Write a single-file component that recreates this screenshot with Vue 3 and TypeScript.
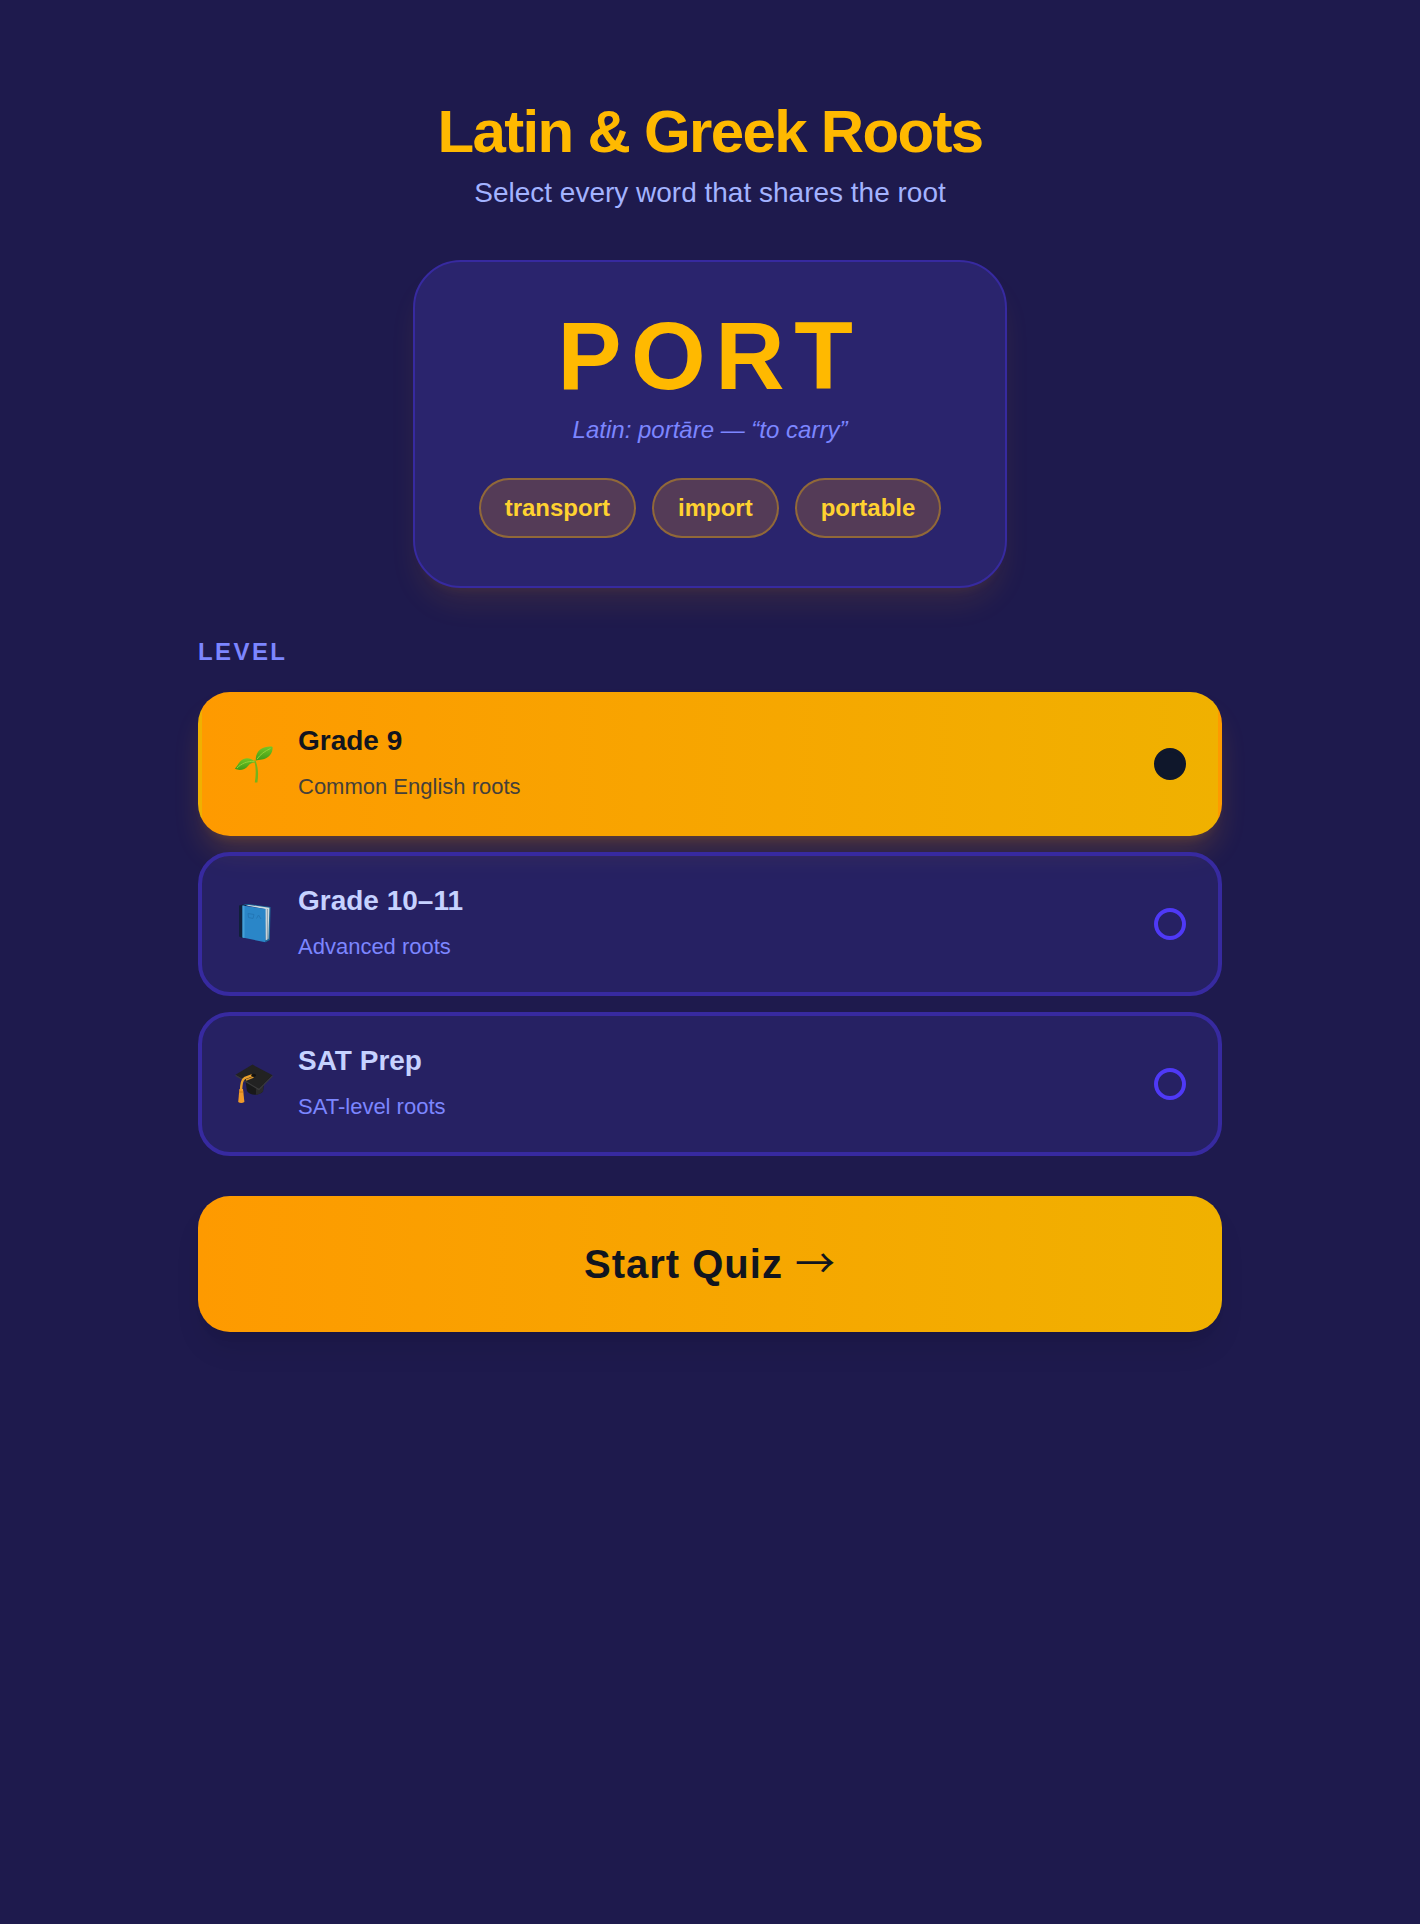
<script setup lang="ts">
import { ref } from 'vue'

interface Level {
  id: string
  icon: 'sprout' | 'book' | 'cap'
  name: string
  note: string
}

const examples: string[] = ['transport', 'import', 'portable']

const levels: Level[] = [
  { id: 'grade-9', icon: 'sprout', name: 'Grade 9', note: 'Common English roots' },
  { id: 'grade-10-11', icon: 'book', name: 'Grade 10–11', note: 'Advanced roots' },
  { id: 'sat', icon: 'cap', name: 'SAT Prep', note: 'SAT-level roots' },
]

const selected = ref<string>('grade-9')
</script>

<template>
  <main class="page">
    <header class="intro">
      <h1 class="title">Latin &amp; Greek Roots</h1>
      <p class="subtitle">Select every word that shares the root</p>
    </header>

    <section class="root-card">
      <h2 class="root">PORT</h2>
      <p class="origin">Latin: portāre — “to carry”</p>
      <ul class="chips">
        <li v-for="word in examples" :key="word" class="chip">{{ word }}</li>
      </ul>
    </section>

    <form class="form" @submit.prevent>
      <fieldset class="levels">
        <legend class="legend">LEVEL</legend>
        <div class="options">
          <label
            v-for="level in levels"
            :key="level.id"
            class="option"
            :class="{ active: selected === level.id }"
          >
            <svg v-if="level.icon === 'sprout'" class="icon" viewBox="0 0 40 40" aria-hidden="true">
              <defs>
                <linearGradient id="leaf" x1="0" y1="0" x2="0" y2="1">
                  <stop offset="0" stop-color="#74c626" />
                  <stop offset="1" stop-color="#3f9a17" />
                </linearGradient>
              </defs>
              <path d="M21 15.5C24 22 24.800 29 23.400 38.500L20.800 38.500C22.200 30 22 23 20.300 17Z" fill="#74b41c" />
              <path d="M21.800 16.600C21.500 9.500 25 4.500 31 3.200C34 2.500 37.500 2.400 38.600 3C39 9 34.500 14.800 28 15.400C25.500 15.600 23.200 15.900 21.800 16.600Z" fill="url(#leaf)" />
              <path d="M21.800 18.200C16.500 13.200 10.500 13.300 6.800 16.800C4.200 19.300 2.800 22.800 0.800 24.800C5 27 11 26 14 22C16 19.300 18.500 18.300 21.800 18.200Z" fill="url(#leaf)" />
              <path d="M23 15.200C26 10.500 31 7 36.500 4.500M3 24C7.500 19.500 13 17 20.500 17.400" fill="none" stroke="#93d238" stroke-width="1" />
            </svg>
            <svg v-else-if="level.icon === 'book'" class="icon" viewBox="0 0 40 40" aria-hidden="true">
              <path d="M5 1.600L9 0.400L12 1V33L8.500 34L5 32.500Z" fill="#10203a" />
              <path d="M9 0.600L14 0L36.600 3L35.800 36L31.500 38.200L31 5Z" fill="#1d6697" />
              <path d="M12 1.400L15 0.900L35.400 3.800L34.400 34.800L31.500 36.500L31 5Z" fill="#cfdadf" />
              <path d="M33.400 5V35" stroke="#8fa3ad" stroke-width="1" />
              <path d="M8.500 1.400L31.600 5L31.400 38.200L8.500 33.600Z" fill="#2a86c8" />
              <path d="M8.500 1.400L10.500 1.700V34L8.500 33.600Z" fill="#45a0d8" />
              <path d="M14 9.500L20 10.500L19 14.500L14.500 13.500ZM22.500 14.500L24.500 11L27 15" fill="none" stroke="#2377b6" stroke-width="1" />
            </svg>
            <svg v-else class="icon" viewBox="0 0 40 40" aria-hidden="true">
              <path d="M11.500 17L13 27C16 31.800 24.500 31.800 29 27.500L30 18Z" fill="#191919" />
              <path d="M22 25L29.500 20L29 27.500C27 29.500 24.500 30.500 22 31Z" fill="#2b2b2b" />
              <path d="M1.500 10.800L18.500 0.600L38.600 11.200L25 24.800Z" fill="#222222" />
              <path d="M1.500 10.800L25 24.800L38.600 11.200L38.600 12.600L25 26.400L1.500 12Z" fill="#3a3a3a" />
              <path d="M18.500 11.200L10.500 14.200C8 15.500 7.200 19 7 27" fill="none" stroke="#e9a02c" stroke-width="2.400" />
              <path d="M19.500 13.200L12 16" fill="none" stroke="#d9952d" stroke-width="1.400" />
              <ellipse cx="19.500" cy="11.300" rx="2.400" ry="1.500" fill="#111111" />
              <path d="M5.400 25H9L10.400 38C8.500 39.400 6 39.400 4.200 38Z" fill="#f09a2a" />
              <path d="M5.200 28H9.400" stroke="#c9781c" stroke-width="1" />
            </svg>
            <span class="copy">
              <span class="name">{{ level.name }}</span>
              <span class="note">{{ level.note }}</span>
            </span>
            <input v-model="selected" class="radio" type="radio" name="level" :value="level.id" />
          </label>
        </div>
      </fieldset>

      <button class="start" type="submit">Start Quiz <span class="arrow">→</span></button>
    </form>
  </main>
</template>

<style>
body {
  margin: 0;
  background: #1e1a4d;
}
</style>

<style scoped>
.page {
  box-sizing: border-box;
  min-height: 100vh;
  padding: 96px 48px;
  display: flex;
  flex-direction: column;
  align-items: center;
  background: #1e1a4d;
  font-family: "Liberation Sans", Arial, sans-serif;
}

.intro {
  text-align: center;
}

.title {
  margin: 0;
  font-size: 60px;
  line-height: 72px;
  font-weight: 700;
  letter-spacing: -0.028em;
  color: #ffb900;
}

.subtitle {
  margin: 4px 0 0;
  font-size: 28px;
  line-height: 42px;
  color: #a3b3ff;
}

.root-card {
  margin-top: 46px;
  padding: 48px 64px;
  border: 2px solid #372aa0;
  border-radius: 48px;
  background: #2a246d;
  text-align: center;
  box-shadow:
    0 20px 30px -6px rgba(254, 154, 0, 0.1),
    0 8px 12px -8px rgba(254, 154, 0, 0.1);
}

.root {
  margin: 0;
  font-size: 96px;
  line-height: 92px;
  font-weight: 700;
  letter-spacing: 0.1em;
  color: #ffb900;
}

.origin {
  margin: 12px 0 0;
  font-size: 24px;
  line-height: 32px;
  font-style: italic;
  color: #7c86ff;
}

.chips {
  margin: 32px 0 0;
  padding: 0;
  display: flex;
  flex-wrap: wrap;
  justify-content: center;
  gap: 16px;
  list-style: none;
}

.chip {
  padding: 12px 24px;
  border: 2px solid rgba(255, 185, 0, 0.36);
  border-radius: 32px;
  background: rgba(254, 154, 0, 0.2);
  font-size: 24px;
  line-height: 32px;
  font-weight: 700;
  color: #ffd230;
}

.form {
  width: 100%;
  max-width: 1024px;
  margin-top: 48px;
}

.levels {
  margin: 0;
  padding: 0;
  border: 0;
  min-width: 0;
}

.legend {
  padding: 0;
  font-size: 24px;
  line-height: 32px;
  font-weight: 700;
  letter-spacing: 0.1em;
  color: #7c86ff;
}

.options {
  margin-top: 24px;
  display: flex;
  flex-direction: column;
  gap: 16px;
}

.option {
  padding: 24px 32px;
  display: flex;
  align-items: center;
  gap: 24px;
  border: 4px solid #372aa0;
  border-radius: 32px;
  background: rgba(49, 44, 133, 0.4);
  cursor: pointer;
}

.option.active {
  border-color: transparent;
  background: linear-gradient(to right, #fe9a00, #f0b100);
  box-shadow:
    0 20px 30px -6px rgba(254, 154, 0, 0.2),
    0 8px 12px -8px rgba(254, 154, 0, 0.2);
}

.icon {
  flex: none;
  width: 40px;
  height: 40px;
}

.copy {
  flex: 1;
  display: flex;
  flex-direction: column;
  gap: 4px;
}

.name {
  font-size: 28px;
  line-height: 42px;
  font-weight: 700;
  color: #c6d2ff;
}

.note {
  font-size: 22px;
  line-height: 42px;
  color: #7c86ff;
}

.active .name {
  color: #11151f;
}

.active .note {
  color: #45403a;
}

.radio {
  appearance: none;
  box-sizing: border-box;
  flex: none;
  width: 32px;
  height: 32px;
  margin: 0;
  border: 4px solid #4f39f6;
  border-radius: 50%;
}

.radio:checked {
  border-color: #0f172b;
  background: #0f172b;
}

.start {
  width: 100%;
  margin-top: 40px;
  padding: 40px;
  border: 0;
  border-radius: 32px;
  background: linear-gradient(to right, #fe9a00, #f0b100);
  box-shadow:
    0 20px 30px -6px rgba(0, 0, 0, 0.1),
    0 8px 12px -8px rgba(0, 0, 0, 0.1);
  font-family: inherit;
  font-size: 40px;
  line-height: 56px;
  font-weight: 700;
  letter-spacing: 0.025em;
  color: #11151f;
  cursor: pointer;
}

.arrow {
  font-family: "Noto Sans CJK JP", sans-serif;
  font-weight: 400;
  line-height: 1;
}
</style>
